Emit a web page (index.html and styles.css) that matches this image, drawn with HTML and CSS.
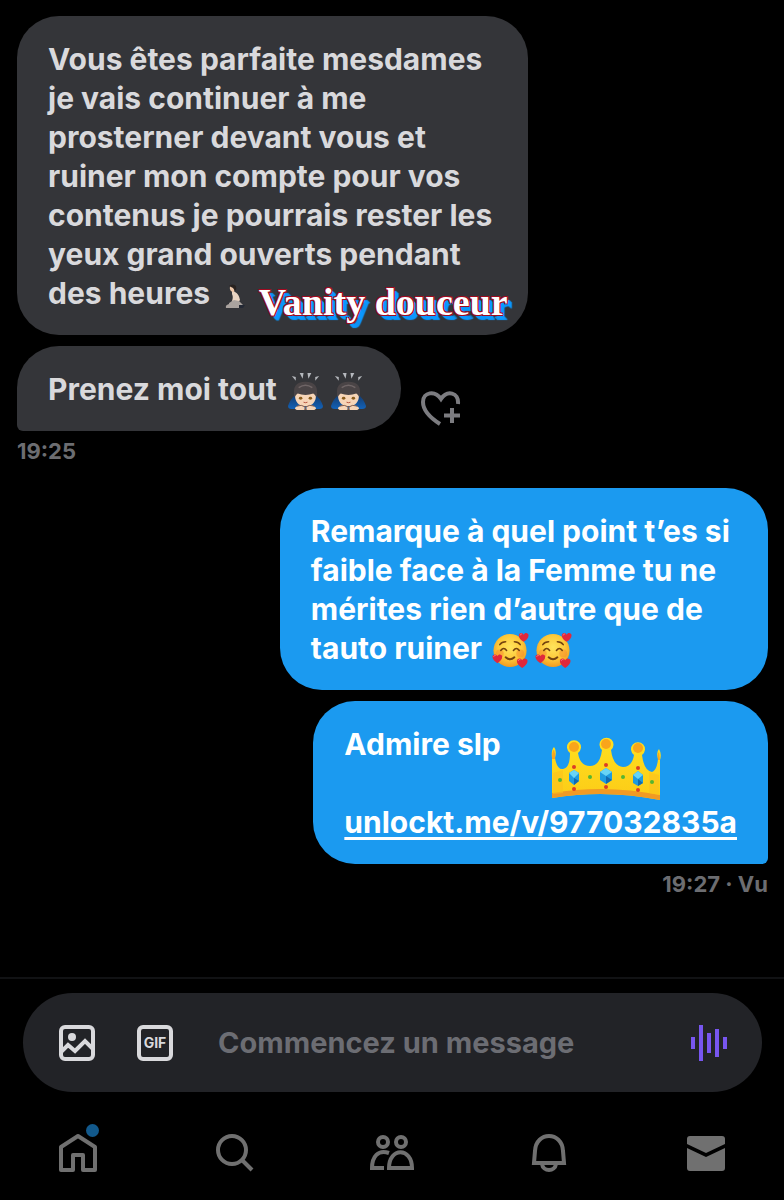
FILE: index.html
```
<!DOCTYPE html>
<html lang="fr">

<head>
    <meta charset="UTF-8">
    <meta name="viewport" content="width=device-width, initial-scale=1.0">
    <title>Messages</title>
    <link rel="stylesheet" href="styles.css">
</head>

<body>
    <!-- Shared drawings -->
    <svg class="defs" aria-hidden="true">
        <defs>
            <radialGradient id="skin" cx="50%" cy="40%" r="60%">
                <stop offset="0" stop-color="#ffe45c" />
                <stop offset="0.6" stop-color="#fdc93a" />
                <stop offset="1" stop-color="#f29a1f" />
            </radialGradient>
            <linearGradient id="gold" x1="0" y1="0" x2="0" y2="1">
                <stop offset="0" stop-color="#ffe01f" />
                <stop offset="1" stop-color="#fccb17" />
            </linearGradient>
            <linearGradient id="sleeve" x1="0" y1="0" x2="0" y2="1">
                <stop offset="0" stop-color="#153a6b" />
                <stop offset="1" stop-color="#1262b8" />
            </linearGradient>
        </defs>
        <symbol id="heart" viewBox="0 0 12 12">
            <path d="M6 11 C3 9 0.5 6.500 0.500 3.800 C0.500 1 4.500 0 6 3 C7.500 0 11.500 1 11.500 3.800 C11.500 6.500 9 9 6 11Z" fill="#e0283c" />
            <path d="M2 3.500 C2 2.500 3 2 3.800 2.300" fill="none" stroke="#ff7c84" stroke-linecap="round" />
        </symbol>
        <symbol id="love-face" viewBox="0 0 38 38">
            <circle cx="18.500" cy="19" r="17" fill="url(#skin)" />
            <circle cx="8" cy="22" r="4" fill="#f58a2e" opacity="0.500" />
            <circle cx="29" cy="22" r="4" fill="#f58a2e" opacity="0.500" />
            <g fill="none" stroke="#74430f" stroke-width="1.600" stroke-linecap="round">
                <path d="M8 13 Q10 10 14 10" />
                <path d="M23 10 Q27 10 29 13" />
                <path d="M9 19 Q12 15 15 19" />
                <path d="M22 19 Q25 15 28 19" />
                <path d="M14 26 Q18.500 30 23 26" stroke-width="2" />
            </g>
            <use href="#heart" x="27" y="0" width="11" height="11" />
            <use href="#heart" x="0" y="22" width="11" height="11" />
            <use href="#heart" x="25" y="26" width="12" height="12" />
        </symbol>
        <symbol id="bowing" viewBox="0 0 38 38">
            <g fill="#b5b8bd">
                <path d="M5 3 L9 4 L9 8Z" />
                <path d="M13 0 L17 0 L16 6Z" />
                <path d="M21 0 L25 0 L22 6Z" />
                <path d="M29 4 L33 3 L29 8Z" />
            </g>
            <path d="M9 22 Q3 27 1 34 Q1 37 5 37 L33 37 Q37 37 37 34 Q35 27 29 22Z" fill="url(#sleeve)" />
            <path d="M8 21 Q8 34 19 34 Q30 34 30 21 L27 14 L11 14Z" fill="#f7d5b7" />
            <path d="M8 25 Q4 9 19 9 Q34 9 30 25 Q29 22 27 21 Q19 24 11 21 Q9 22 8 25Z" fill="#4a4446" />
            <path d="M12 15 Q19 10 26 15" fill="none" stroke="#6f6566" stroke-width="1.500" />
            <ellipse cx="14" cy="26" rx="1.800" ry="1.500" fill="#8b5c1c" />
            <ellipse cx="24" cy="26" rx="1.800" ry="1.500" fill="#8b5c1c" />
            <path d="M17 30 Q19 31 21 30" fill="none" stroke="#b5533e" />
            <path d="M9 35 Q15 32 18 35 L18 38 L10 38 Q7 37 9 35Z M29 35 Q23 32 20 35 L20 38 L28 38 Q31 37 29 35Z" fill="#f7d5b7" />
            <path d="M10 34 Q15 32 19 35 Q23 32 28 34 M19 35 V38" fill="none" stroke="#8b5f48" />
        </symbol>
    </svg>

    <div class="app">
        <main class="messages">
            <div class="bubble received">
                Vous êtes parfaite mesdames je vais continuer à me prosterner devant vous et ruiner mon compte pour vos contenus je pourrais rester les yeux grand ouverts pendant des heures
                <svg class="kneeling" viewBox="0 0 20 26" role="img" aria-label="Homme à genoux">
                    <path d="M7 7 L10 9 Q14 11 15 17 L12 21 L6 20 Q9 15 7 11Z" fill="#ead5c3" />
                    <path d="M4 20 L9 17 L14 18 L18 22 L16 25 L1 25 Q0 22 4 21Z" fill="#aaa39f" />
                    <path d="M14 22 L20 22 L18 25 L14 25Z" fill="#242935" />
                    <path d="M5 3 Q4 9 9 9 L10 4Z" fill="#edc7a9" />
                    <path d="M4 3 Q8 0 11 3 Q12 6 10 8 L8 5Z" fill="#28221f" />
                </svg>
                <span class="signature">Vanity douceur</span>
            </div>

            <div class="message-row">
                <div class="bubble received last">
                    Prenez moi tout
                    <svg class="emoji" role="img" aria-label="Homme qui s'incline"><use href="#bowing" /></svg><svg class="emoji" role="img" aria-label="Homme qui s'incline"><use href="#bowing" /></svg>
                </div>
                <button type="button" class="react" aria-label="Ajouter une réaction">
                    <svg viewBox="0 0 40 36">
                        <path d="M19 33 C8 26 2 19 2 11 C2 1 14 -1 20 8 C26 -1 38 1 37 13" />
                        <path d="M31 17 V32 M23 24.500 H39" />
                    </svg>
                </button>
            </div>
            <div class="time">19:25</div>

            <div class="bubble sent">
                Remarque à quel point t’es si faible face à la Femme tu ne mérites rien d’autre que de tauto ruiner
                <svg class="emoji" role="img" aria-label="Visage souriant avec des cœurs"><use href="#love-face" /></svg><svg class="emoji" role="img" aria-label="Visage souriant avec des cœurs"><use href="#love-face" /></svg>
            </div>

            <div class="bubble sent last">
                Admire slp<br><br>
                <a href="#">unlockt.me/v/977032835a</a>
                <svg class="crown" viewBox="0 0 110 64" role="img" aria-label="Couronne">
                    <path d="M1 62 L1 22 Q0 14 3 11 Q6 14 4 22 Q6 34 12 33 Q19 32 19 17 A7 7 0 1 1 27 17 Q29 30 39 30 Q49 30 51 14 A7 7 0 1 1 60 14 Q62 30 72 31 Q81 31 83 19 A7 7 0 1 1 91 19 Q93 35 101 36 Q106 34 107 23 Q105 16 108 13 Q111 18 109 24 L109 64 Q55 53 1 62Z" fill="url(#gold)" />
                    <path d="M1 57 Q55 48 109 59 L109 64 Q55 53 1 62Z" fill="#f19a24" />
                    <path d="M2 37 L12 34 L12 57 L2 58Z M98 36 L108 39 L108 59 L98 57Z" fill="#fbc21d" opacity="0.600" />
                    <g fill="#f9a51b">
                        <circle cx="23" cy="11" r="5" />
                        <circle cx="55" cy="8" r="5" />
                        <circle cx="87" cy="12" r="5" />
                        <path d="M1 23 Q1 14 3 14 Q5 18 4 23Z M107 24 Q106 18 108 16 L109 24Z" />
                    </g>
                    <g fill="#1e9be0">
                        <path d="M23 34 L28 37 V45 L23 49 L18 45 V37Z" />
                        <path d="M55 32 L61 36 V44 L55 48 L49 44 V36Z" />
                        <path d="M87 35 L92 39 V47 L87 50 L82 47 V39Z" />
                    </g>
                    <path d="M23 34 L28 37 L23 42 L18 37Z M55 32 L61 36 L55 40 L49 36Z M87 35 L92 39 L87 43 L82 39Z" fill="#67d4f5" />
                    <path d="M23 42 L28 45 L23 49Z M55 40 L61 44 L55 48Z M87 43 L92 47 L87 50Z" fill="#1169b0" />
                    <g fill="#dc3e24">
                        <circle cx="23" cy="31" r="2" />
                        <circle cx="55" cy="29" r="2" />
                        <circle cx="87" cy="32" r="2" />
                        <circle cx="23" cy="53" r="2" />
                        <circle cx="55" cy="51" r="2" />
                        <circle cx="87" cy="54" r="2" />
                    </g>
                    <g fill="#56b531">
                        <circle cx="9" cy="44" r="2" />
                        <circle cx="39" cy="41" r="2" />
                        <circle cx="72" cy="41" r="2" />
                        <circle cx="101" cy="46" r="2" />
                    </g>
                </svg>
            </div>
            <div class="time sent-time">19:27 · Vu</div>
        </main>

        <form class="composer-bar">
            <div class="composer">
                <div class="tools">
                    <button type="button" class="tool" aria-label="Ajouter une photo">
                        <svg viewBox="0 0 36 36">
                            <rect x="2" y="2" width="32" height="32" rx="4" fill="none" stroke="currentColor" stroke-width="4" />
                            <circle cx="13" cy="12" r="4" fill="currentColor" />
                            <path d="M2 27 L9 20 L16 26 L26 16 L34 24" fill="none" stroke="currentColor" stroke-width="4" />
                        </svg>
                    </button>
                    <button type="button" class="tool gif">GIF</button>
                </div>
                <input type="text" class="message-input" aria-label="Message" placeholder="Commencez un message">
                <button type="button" class="tool voice" aria-label="Message vocal">
                    <svg viewBox="0 0 36 36">
                        <path d="M2 12 V24 M10 0 V36 M18 8 V28 M26 4 V32 M34 12 V24" stroke="currentColor" stroke-width="4" />
                    </svg>
                </button>
            </div>
        </form>

        <nav class="tabs">
            <a href="#" aria-label="Accueil">
                <svg viewBox="0 0 40 40">
                    <path d="M3 14 L20 3 L37 14 V37 H25 V22 H15 V37 H3Z" stroke-linejoin="round" />
                </svg>
                <span class="dot"></span>
            </a>
            <a href="#" aria-label="Recherche">
                <svg viewBox="0 0 40 40">
                    <circle cx="17" cy="17" r="14" />
                    <path d="M27 27 L37 37" />
                </svg>
            </a>
            <a href="#" aria-label="Communautés">
                <svg class="people" viewBox="0 0 44 40">
                    <circle cx="13" cy="9" r="5" />
                    <circle cx="31" cy="9" r="5" />
                    <path d="M19 20 C8 16 2 24 2 35 H14" />
                    <path d="M19 35 C19 14 42 14 42 35Z" />
                </svg>
            </a>
            <a href="#" aria-label="Notifications">
                <svg viewBox="0 0 40 40">
                    <path d="M5 30 L6 18 C7 -2 33 -2 34 18 L35 30Z" />
                    <path d="M13 31 C14 39 26 39 27 31" />
                </svg>
            </a>
            <a href="#" aria-label="Messages">
                <svg class="filled" viewBox="0 0 40 40">
                    <path d="M1 11 V6 Q1 3 4 3 H36 Q39 3 39 6 V11 L20 20Z" />
                    <path d="M1 15 L20 24 L39 15 V35 Q39 38 36 38 H4 Q1 38 1 35Z" />
                </svg>
            </a>
        </nav>
    </div>
</body>

</html>
```
FILE: styles.css
```
* {
    box-sizing: border-box;
}

body {
    margin: 0;
    background-color: #000;
    color: #d9d9dc;
    font-family: Inter, Arial, sans-serif;
    font-size: 30px;
    font-weight: bold;
    line-height: 39px;
}

button {
    padding: 0;
    border: none;
    background: none;
    color: inherit;
    font: inherit;
    cursor: pointer;
}

svg {
    display: block;
}

.defs {
    position: absolute;
    width: 0;
    height: 0;
}

.app {
    display: flex;
    flex-direction: column;
    min-height: 100vh;
}

/* Messages */
.messages {
    display: flex;
    flex: 1;
    flex-direction: column;
    align-items: flex-start;
    gap: 11px;
    padding: 16px 16px 0 17px;
}

.bubble {
    position: relative;
    padding: 24px 31px 22px;
    border-radius: 42px;
}

.received {
    max-width: 68%;
    background-color: #343539;
}

.message-row .received {
    max-width: none;
}

.received.last {
    border-bottom-left-radius: 6px;
}

.sent {
    align-self: flex-end;
    max-width: 65%;
    background-color: #1b9af0;
    color: #fff;
}

.sent.last {
    border-bottom-right-radius: 6px;
}

.sent a {
    color: #fff;
    text-decoration-thickness: 3px;
    text-underline-offset: 4px;
}

.message-row {
    display: flex;
    align-items: flex-end;
    gap: 20px;
}

.react {
    width: 40px;
    height: 36px;
    margin-bottom: 4px;
}

.react svg {
    fill: none;
    stroke: #7c7c80;
    stroke-width: 4;
}

.emoji {
    display: inline-block;
    width: 37px;
    height: 37px;
    margin: -8px 3px;
    vertical-align: middle;
}

.kneeling {
    display: inline-block;
    width: 20px;
    height: 26px;
    margin: -8px 0 -8px 8px;
    vertical-align: middle;
}

.signature {
    position: absolute;
    right: 20px;
    bottom: 9px;
    color: #fff;
    font-family: "Liberation Serif", serif;
    font-size: 38px;
    line-height: 48px;
    white-space: nowrap;
    text-shadow: -1px -1px 0 #a00a20, 1px -1px 0 #a00a20, -1px 1px 0 #a00a20, 1px 1px 0 #a00a20,
        3px 3px 1px #0c98ff, 4px 4px 1px #0c98ff, 5px 5px 1px #0c98ff;
}

.crown {
    position: absolute;
    top: 35px;
    right: 107px;
    width: 110px;
    height: 64px;
}

.time {
    margin: -5px 0 12px;
    color: #6c6d71;
    font-size: 22px;
    line-height: 28px;
}

.sent-time {
    align-self: flex-end;
}

/* Composer */
.composer-bar {
    padding: 14px 22px 15px 23px;
    border-top: 2px solid #111214;
}

.composer {
    display: flex;
    align-items: center;
    gap: 45px;
    height: 99px;
    padding: 0 35px 0 36px;
    border-radius: 50px;
    background-color: #222327;
}

.tools {
    display: flex;
    gap: 42px;
}

.tool {
    width: 36px;
    height: 36px;
}

.gif {
    border: 4px solid #d9d9dc;
    border-radius: 6px;
    font-size: 14px;
    line-height: 28px;
}

.voice {
    color: #7856f0;
}

.message-input {
    flex: 1;
    min-width: 0;
    padding: 0;
    border: none;
    outline: none;
    background: none;
    color: #d9d9dc;
    font: inherit;
    font-size: 29px;
}

.message-input::placeholder {
    color: #6c6d73;
    opacity: 1;
}

/* Bottom tabs */
.tabs {
    display: flex;
    height: 93px;
    padding-bottom: 1px;
}

.tabs a {
    display: flex;
    position: relative;
    flex: 1;
    align-items: center;
    justify-content: center;
}

.tabs svg {
    width: 40px;
    height: 40px;
    fill: none;
    stroke: #707070;
    stroke-width: 4;
}

.tabs .people {
    width: 44px;
}

.tabs .filled {
    fill: #707070;
    stroke: none;
}

.dot {
    position: absolute;
    top: 17px;
    left: calc(50% + 8px);
    width: 13px;
    height: 13px;
    border-radius: 50%;
    background-color: #12598c;
}
```
